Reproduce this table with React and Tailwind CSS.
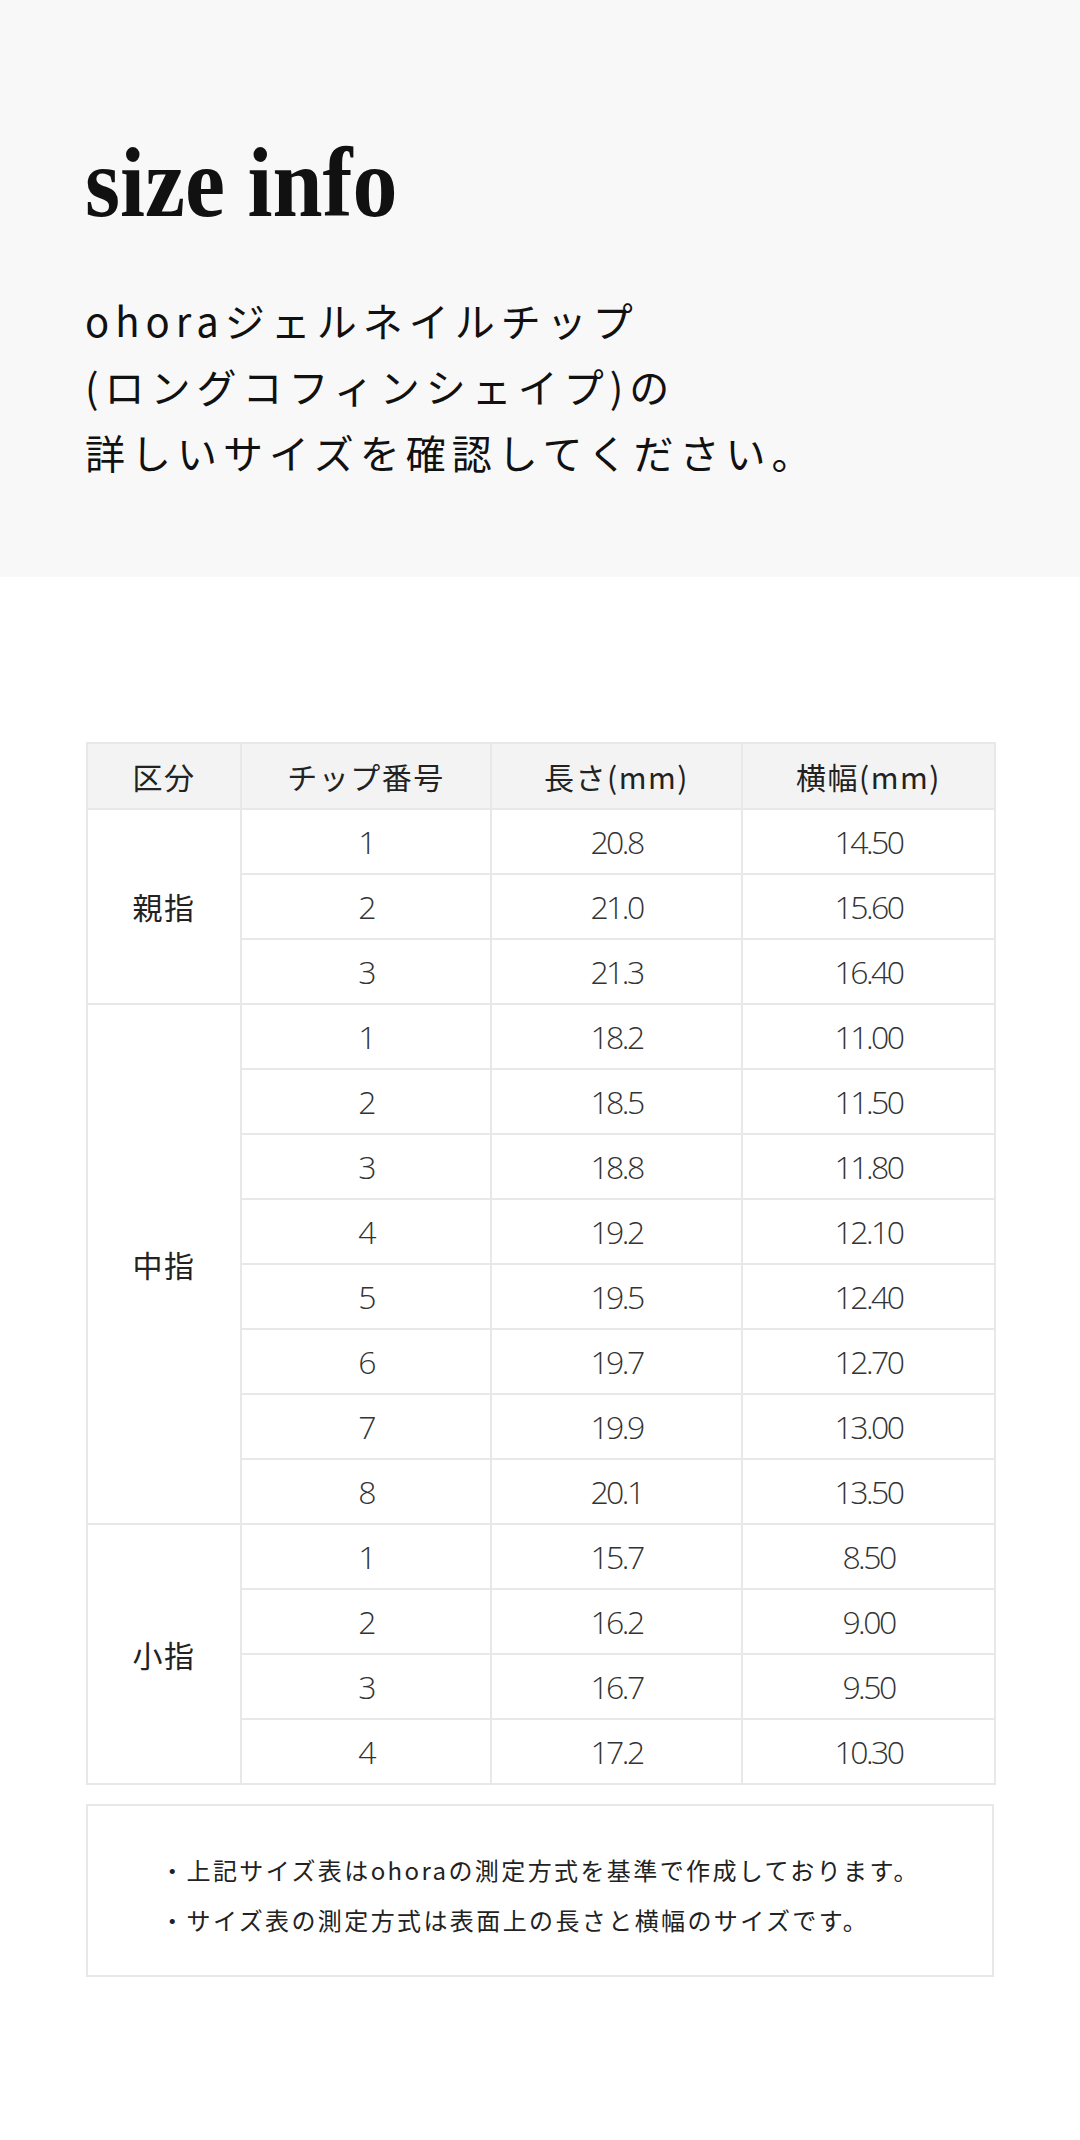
import React from "react";

const JP = { fontFamily: '"Noto Sans CJK JP", "Noto Sans", sans-serif' };

const GROUPS = [
  {
    name: "親指",
    rows: [
      ["1", "20.8", "14.50"],
      ["2", "21.0", "15.60"],
      ["3", "21.3", "16.40"],
    ],
  },
  {
    name: "中指",
    rows: [
      ["1", "18.2", "11.00"],
      ["2", "18.5", "11.50"],
      ["3", "18.8", "11.80"],
      ["4", "19.2", "12.10"],
      ["5", "19.5", "12.40"],
      ["6", "19.7", "12.70"],
      ["7", "19.9", "13.00"],
      ["8", "20.1", "13.50"],
    ],
  },
  {
    name: "小指",
    rows: [
      ["1", "15.7", "8.50"],
      ["2", "16.2", "9.00"],
      ["3", "16.7", "9.50"],
      ["4", "17.2", "10.30"],
    ],
  },
];

const NOTES = [
  "上記サイズ表はohoraの測定方式を基準で作成しております。",
  "サイズ表の測定方式は表面上の長さと横幅のサイズです。",
];

function Num({ children }) {
  return (
    <span className="text-[32px] font-light tracking-[-0.08em] text-[#333]" style={{ fontFamily: '"Open Sans", "Noto Sans", sans-serif' }}>
      {children}
    </span>
  );
}

export default function App() {
  return (
    <div className="w-[1080px] min-h-[2140px] bg-white" style={JP}>
      <section className="h-[577px] bg-[#f8f8f8] pl-[85px] pt-[133px]">
        <h1
          className="origin-left scale-x-90 text-[100px] leading-[100px] font-bold text-[#111]"
          style={{ fontFamily: '"Liberation Serif", "Times New Roman", serif' }}
        >
          size info
        </h1>
        <p className="mt-[54px] text-[40px] leading-[66px] tracking-[0.15em] text-[#111]">
          ohoraジェルネイルチップ
          <br />
          (ロングコフィンシェイプ)の
          <br />
          詳しいサイズを確認してください。
        </p>
      </section>

      <section className="px-[86px] pt-[165px]">
        <table className="w-[908px] table-fixed border-collapse text-center text-[#222]">
          <colgroup>
            <col className="w-[154px]" />
            <col className="w-[250px]" />
            <col className="w-[251px]" />
            <col className="w-[253px]" />
          </colgroup>
          <thead>
            <tr className="h-[66px] bg-[#f3f3f3] text-[30px] tracking-[0.05em]">
              <th className="border-2 border-[#e8e8e8] font-normal">区分</th>
              <th className="border-2 border-[#e8e8e8] font-normal">チップ番号</th>
              <th className="border-2 border-[#e8e8e8] font-normal">長さ(mm)</th>
              <th className="border-2 border-[#e8e8e8] font-normal">横幅(mm)</th>
            </tr>
          </thead>
          <tbody>
            {GROUPS.map((g) =>
              g.rows.map((r, i) => (
                <tr key={g.name + r[0]} className="h-[65px]">
                  {i === 0 && (
                    <td rowSpan={g.rows.length} className="border-2 border-[#e8e8e8] text-[30px] tracking-[0.05em]">
                      {g.name}
                    </td>
                  )}
                  <td className="border-2 border-[#e8e8e8]"><Num>{r[0]}</Num></td>
                  <td className="border-2 border-[#e8e8e8]"><Num>{r[1]}</Num></td>
                  <td className="border-2 border-[#e8e8e8]"><Num>{r[2]}</Num></td>
                </tr>
              ))
            )}
          </tbody>
        </table>

        <div className="mt-[19px] flex h-[173px] w-[908px] items-center justify-center border-2 border-[#e8e8e8] pt-[8px]">
          <ul className="text-[24px] leading-[50px] tracking-[0.1em] text-[#222]">
            {NOTES.map((n) => (
              <li key={n}>・{n}</li>
            ))}
          </ul>
        </div>
      </section>
    </div>
  );
}
